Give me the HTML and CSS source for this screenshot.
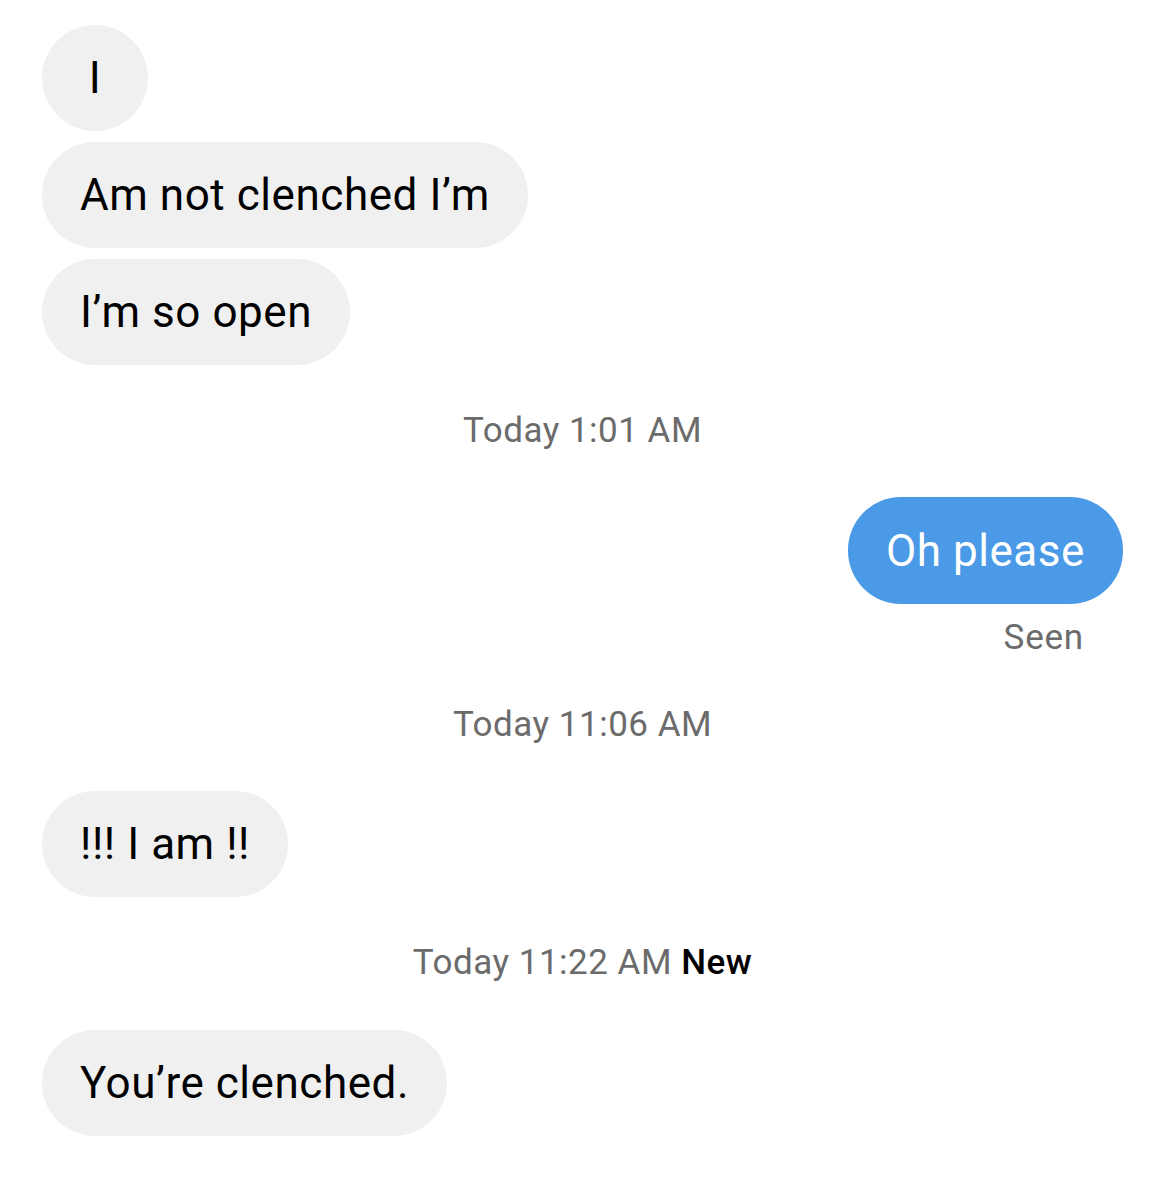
FILE: index.html
```html
<!DOCTYPE html>
<html>
<head>
<meta charset="utf-8">
<link rel="stylesheet" href="styles.css">
</head>
<body>
<div class="thread">
  <div class="row in"><div class="bubble gray round">I</div></div>
  <div class="row in tight"><div class="bubble gray">Am not clenched I’m</div></div>
  <div class="row in tight"><div class="bubble gray">I’m so open</div></div>
  <div class="stamp s1">Today 1:01 AM</div>
  <div class="row out"><div class="bubble blue">Oh please</div></div>
  <div class="seen">Seen</div>
  <div class="stamp s2">Today 11:06 AM</div>
  <div class="row in"><div class="bubble gray">!!! I am !!</div></div>
  <div class="stamp s3">Today 11:22 AM <span class="new">New</span></div>
  <div class="row in"><div class="bubble gray">You’re clenched.</div></div>
</div>
</body>
</html>
```

FILE: styles.css
```css
html, body {
  margin: 0;
  padding: 0;
  background: #ffffff;
}
body {
  font-family: Roboto, "Liberation Sans", sans-serif;
  width: 1166px;
  height: 1200px;
  overflow: hidden;
}
.thread {
  display: flex;
  flex-direction: column;
  padding: 25px 43px 0 42px;
}
.row {
  display: flex;
}
.row.in { justify-content: flex-start; }
.row.out { justify-content: flex-end; margin-top: 44px; }
.row.tight { margin-top: 11px; }
.bubble {
  height: 106px;
  box-sizing: border-box;
  padding: 0 38px;
  border-radius: 53px;
  display: flex;
  align-items: center;
  font-size: 44px;
  letter-spacing: 0.55px;
  color: #000;
  white-space: nowrap;
}
.bubble.round {
  width: 106px;
  padding: 0;
  justify-content: center;
}
.gray { background: #f0f0f0; }
.blue {
  background: #4b9ae8;
  color: #fff;
  height: 107px;
}
.stamp {
  height: 44px;
  line-height: 44px;
  text-align: center;
  font-size: 35px;
  color: #6b6b6b;
  letter-spacing: 0.5px;
  margin-top: 44px;
  margin-bottom: 44px;
}
.stamp + .row { margin-top: 0; }
.s3 { margin-bottom: 45px; }
.new { color: #000; font-weight: 500; }
.seen {
  align-self: flex-end;
  margin-right: 39px;
  height: 40px;
  line-height: 40px;
  font-size: 35px;
  letter-spacing: 0.8px;
  color: #6b6b6b;
  margin-top: 14px;
}
.seen + .stamp { margin-top: 45px; }
```
